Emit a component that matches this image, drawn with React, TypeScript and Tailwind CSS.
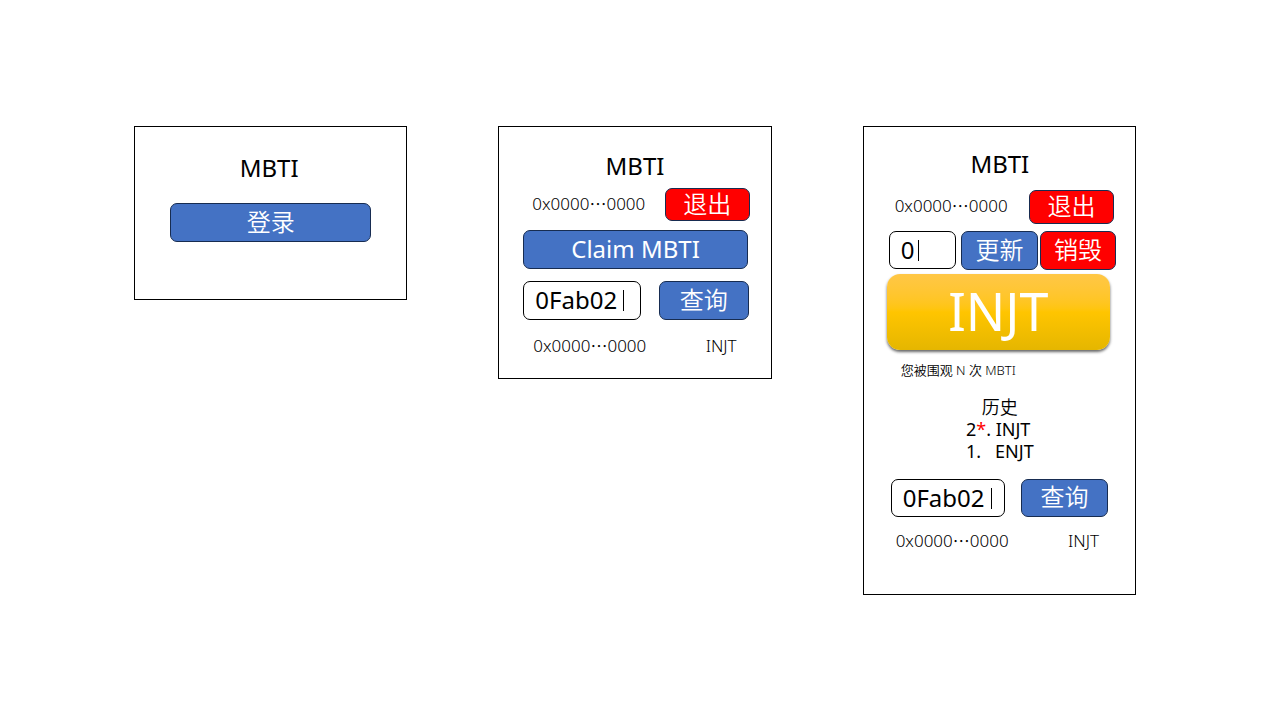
import type { ReactNode } from "react";

type Tone = "blue" | "red";

const tones: Record<Tone, string> = {
  blue: "bg-[#4472c4] border-[#172c51]",
  red: "bg-[#ff0000] border-[#172c51]",
};

function ActionButton({ tone, className, children }: { tone: Tone; className: string; children: ReactNode }) {
  return (
    <button
      type="button"
      className={`flex items-center justify-center rounded-[7px] border pb-[2px] text-2xl leading-8 whitespace-nowrap text-white ${tones[tone]} ${className}`}
    >
      {children}
    </button>
  );
}

function TextField({ label, value, className, inputClass }: { label: string; value: string; className: string; inputClass: string }) {
  return (
    <div className={`flex items-center rounded-[7px] border border-black bg-white pl-[11px] ${className}`}>
      <input aria-label={label} defaultValue={value} className={`pb-px text-2xl leading-8 font-normal outline-none ${inputClass}`} />
      <span aria-hidden="true" className="h-[21px] w-px bg-black" />
    </div>
  );
}

function Panel({ className, children }: { className: string; children: ReactNode }) {
  return (
    <section className={`flex flex-col border border-black ${className}`}>
      {children}
    </section>
  );
}

function Title() {
  return <h1 className="pr-[3px] text-center text-2xl leading-8 font-normal">MBTI</h1>;
}

function Address() {
  return (
    <span className="flex h-6 items-center text-[17px] leading-6">
      0x0000<span className="font-['Noto_Sans_CJK_SC',sans-serif]">…</span>0000
    </span>
  );
}

export default function App() {
  return (
    <main lang="zh-CN" className="grid grid-cols-3 items-start gap-[91px] bg-white pt-[126px] pr-[144px] pb-[125px] pl-[134px] font-['Noto_Sans','Noto_Sans_CJK_SC',sans-serif] font-[350] text-black">
      <Panel className="px-[35px] pt-[25px] pb-[57px]">
        <Title />
        <ActionButton tone="blue" className="mt-[19px] h-[39px]">登录</ActionButton>
      </Panel>

      <Panel className="pt-[23px] pr-[21px] pb-5 pl-6">
        <Title />
        <div className="mt-[6px] flex items-start justify-between pl-[9px]">
          <div className="pt-1">
            <Address />
          </div>
          <ActionButton tone="red" className="h-[33px] w-[85px]">退出</ActionButton>
        </div>
        <ActionButton tone="blue" className="mt-[9px] mr-[2px] h-[39px] font-normal">Claim MBTI</ActionButton>
        <div className="mt-3 mr-px flex items-center justify-between">
          <TextField label="地址" value="0Fab02" className="h-[39px] w-[118px]" inputClass="w-[88px]" />
          <ActionButton tone="blue" className="h-[39px] w-[90px]">查询</ActionButton>
        </div>
        <div className="mt-[14px] flex items-center justify-between pr-[13px] pl-[10px]">
          <Address />
          <span className="text-[17px] leading-6">INJT</span>
        </div>
      </Panel>

      <Panel className="pt-[21px] pr-[19px] pb-[41px] pl-[23px]">
        <Title />
        <div className="mt-[10px] flex items-start justify-between pr-[2px] pl-2">
          <div className="pt-1">
            <Address />
          </div>
          <ActionButton tone="red" className="h-[34px] w-[85px]">退出</ActionButton>
        </div>
        <div className="mt-[7px] flex items-start justify-between pl-[2px]">
          <TextField label="编号" value="0" className="h-[38px] w-[67px]" inputClass="w-[17px]" />
          <div className="flex gap-[2px]">
            <ActionButton tone="blue" className="h-[39px] w-[77px]">更新</ActionButton>
            <ActionButton tone="red" className="h-[39px] w-[76px]">销毁</ActionButton>
          </div>
        </div>
        <div className="mt-1 mr-[6px] flex h-[76px] items-center justify-center rounded-[13px] bg-linear-to-b from-[#ffc746] via-[#ffc500] to-[#e5b600] pb-[2px] text-[52px] leading-[64px] font-normal text-white shadow-[0_2px_3px_rgba(0,0,0,0.6)]">
          INJT
        </div>
        <p className="mt-[10px] pl-[14px] text-[13px] leading-5">您被围观 N 次 MBTI</p>
        <section className="mt-4 flex flex-col items-center pr-[3px]">
          <h2 className="text-lg leading-[22px]">历史</h2>
          <ol className="text-lg leading-[22px] font-normal">
            <li className="whitespace-pre">2<span className="text-[#ff0000]">*</span>. INJT</li>
            <li className="whitespace-pre">1.   ENJT</li>
          </ol>
        </section>
        <div className="mt-[17px] mr-2 ml-1 flex items-center justify-between">
          <TextField label="地址" value="0Fab02" className="h-[38px] w-[114px]" inputClass="w-[88px]" />
          <ActionButton tone="blue" className="h-[38px] w-[87px]">查询</ActionButton>
        </div>
        <div className="mt-3 mr-[17px] ml-[9px] flex items-center justify-between">
          <Address />
          <span className="text-[17px] leading-6">INJT</span>
        </div>
      </Panel>
    </main>
  );
}
